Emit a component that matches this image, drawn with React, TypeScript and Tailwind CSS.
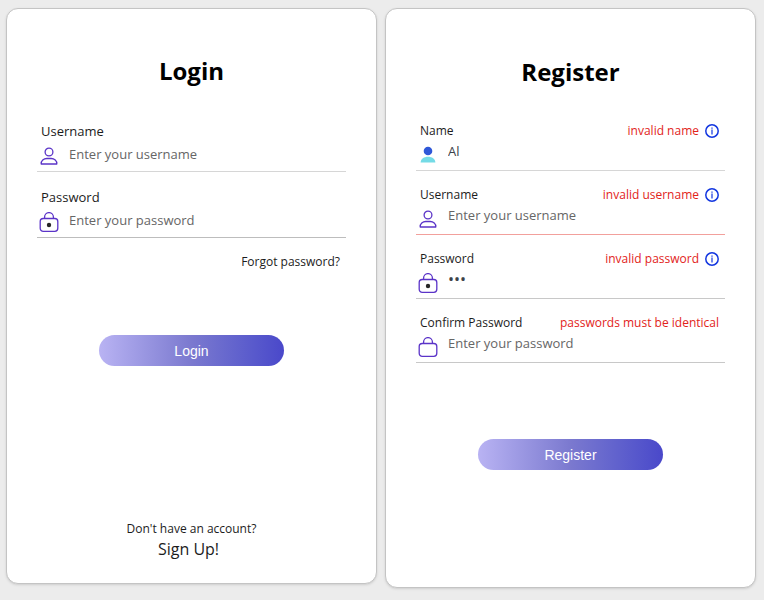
import { useState, type ReactNode } from "react";

type IconName = "user" | "userFilled" | "lock" | "lockEmpty";

function FieldIcon({ name }: { name: IconName }) {
  if (name === "user") {
    return (
      <svg aria-hidden="true" viewBox="0 0 20 20" className="h-5 w-5 shrink-0" fill="none" stroke="#5b34c8" strokeWidth="1.3">
        <circle cx="10" cy="6" r="3.9" />
        <path d="M2.2 18c-.3-3.2 2.6-5.500 5.600-5.500h4.400c3 0 5.900 2.300 5.600 5.500z" strokeLinejoin="round" />
      </svg>
    );
  }
  if (name === "userFilled") {
    return (
      <svg aria-hidden="true" viewBox="0 0 20 20" className="h-5 w-5 shrink-0">
        <circle cx="10" cy="6" r="4.3" fill="#2f58d8" />
        <path d="M2.6 17.6c.2-3.800 3.400-5.900 7.400-5.900s7.200 2.100 7.400 5.900z" fill="#74dbe6" />
      </svg>
    );
  }
  return (
    <svg aria-hidden="true" viewBox="0 0 20 20" className="h-5 w-5 shrink-0" fill="none" stroke="#5b34c8" strokeWidth="1.3">
      <path d="M5.600 6.500V5a4.400 4.400 0 0 1 8.800 0v1.500" />
      <rect x="1.200" y="6.500" width="17.600" height="12.800" rx="3" />
      {name === "lock" && <circle cx="10" cy="13" r="2.200" fill="#262626" stroke="none" />}
    </svg>
  );
}

function InfoButton({ label }: { label: string }) {
  return (
    <button type="button" aria-label={label} className="shrink-0">
      <svg aria-hidden="true" viewBox="0 0 14 14" className="h-3.5 w-3.5" fill="none" stroke="#1236e0">
        <circle cx="7" cy="7" r="6.2" strokeWidth="1.5" />
        <path d="M7 5.600v4.900" strokeWidth="1.200" />
        <path d="M7 3.400v1.300" strokeWidth="1.200" />
      </svg>
    </button>
  );
}

type FieldProps = {
  id: string;
  label: string;
  icon: IconName;
  type?: string;
  placeholder?: string;
  initial?: string;
  labelClass: string;
  inputClass: string;
  lineClass: string;
  error?: string;
  info?: boolean;
};

function Field({ id, label, icon, type = "text", placeholder, initial = "", labelClass, inputClass, lineClass, error, info }: FieldProps) {
  const [value, setValue] = useState(initial);
  return (
    <div>
      <div className="flex h-5 items-center justify-between pr-1.5 pl-1">
        <label htmlFor={id} className={labelClass}>
          {label}
        </label>
        {error && (
          <div className="flex items-center gap-1.5">
            <span className="text-xs text-[#e2231a]">{error}</span>
            {info && <InfoButton label={`About ${error}`} />}
          </div>
        )}
      </div>
      <div className={`flex h-[30px] gap-2.5 border-b pl-0.5 ${lineClass}`}>
        <div className="pt-1">
          <FieldIcon name={icon} />
        </div>
        <input
          id={id}
          type={type}
          placeholder={placeholder}
          value={value}
          onChange={(e) => setValue(e.target.value)}
          className={`min-w-0 flex-1 bg-transparent text-[#3c4248] outline-none placeholder:text-[#666666] ${inputClass}`}
        />
      </div>
    </div>
  );
}

function Card({ title, className, children }: { title: string; className: string; children: ReactNode }) {
  return (
    <form
      onSubmit={(e) => e.preventDefault()}
      className={`flex flex-1 flex-col rounded-xl border border-[#c4c4c4] bg-white px-[30px] shadow ${className}`}
    >
      <h1 className="text-center text-2xl font-bold text-black">{title}</h1>
      {children}
    </form>
  );
}

function SubmitButton({ children, className }: { children: ReactNode; className: string }) {
  return (
    <button
      type="submit"
      className={`h-[31px] w-3/5 self-center rounded-full bg-linear-to-r from-[#b9b3f3] via-[#7b79cf] to-[#4a48ca] font-['Liberation_Sans',sans-serif] text-sm text-white ${className}`}
    >
      {children}
    </button>
  );
}

export default function App() {
  const loginLabel = "text-[13px]";
  const loginInput = "h-6 text-[13px]";
  const registerLabel = "text-xs";
  const registerInput = "h-5 text-[13px]";
  return (
    <main className="flex min-h-screen items-start gap-2 bg-[#ececec] pt-2 pr-2 pb-3 pl-1.5 font-['Open_Sans',sans-serif] text-[#1c1c1c]">
      <Card title="Login" className="min-h-[576px] pt-[46px] pb-[22px]">
        <div className="mt-[35px] flex flex-col gap-4">
          <Field id="login-username" label="Username" icon="user" placeholder="Enter your username" labelClass={loginLabel} inputClass={loginInput} lineClass="border-[#d6d6d6]" />
          <Field id="login-password" label="Password" icon="lock" type="password" placeholder="Enter your password" labelClass={loginLabel} inputClass={loginInput} lineClass="border-[#bdbdbd]" />
        </div>
        <a href="#forgot" className="mt-4 mr-1.5 self-end text-xs">
          Forgot password?
        </a>
        <SubmitButton className="mt-[65px]">Login</SubmitButton>
        <div className="mt-auto flex flex-col items-center">
          <span className="text-xs">Don't have an account?</span>
          <a href="#signup" className="mr-1.5 text-base">
            Sign Up!
          </a>
        </div>
      </Card>
      <Card title="Register" className="min-h-[580px] pt-[47px] pb-6">
        <div className="mt-[33px] flex flex-col gap-3.5">
          <Field id="name" label="Name" icon="userFilled" initial="Al" labelClass={registerLabel} inputClass={registerInput} lineClass="border-[#d6d6d6]" error="invalid name" info />
          <Field id="reg-username" label="Username" icon="user" placeholder="Enter your username" labelClass={registerLabel} inputClass={registerInput} lineClass="border-[#f2a09c]" error="invalid username" info />
          <Field id="reg-password" label="Password" icon="lock" type="password" initial="abc" labelClass={registerLabel} inputClass="h-5 text-base" lineClass="border-[#c8c8c8]" error="invalid password" info />
          <Field id="confirm" label="Confirm Password" icon="lockEmpty" type="password" placeholder="Enter your password" labelClass={registerLabel} inputClass={registerInput} lineClass="border-[#c8c8c8]" error="passwords must be identical" />
        </div>
        <SubmitButton className="mt-[76px]">Register</SubmitButton>
      </Card>
    </main>
  );
}
